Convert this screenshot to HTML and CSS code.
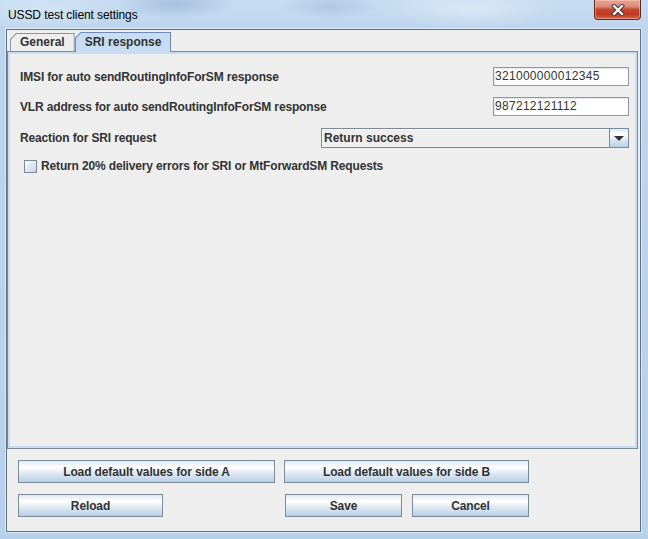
FILE: index.html
```html
<!DOCTYPE html>
<html>
<head>
<meta charset="utf-8">
<title>USSD test client settings</title>
<link rel="stylesheet" href="styles.css">
</head>
<body>
<div class="window">
  <div class="titlebar">
    <span class="title">USSD test client settings</span>
    <div class="close">
      <svg width="14" height="12" viewBox="0 0 14 12">
        <path d="M3 2 L11 10 M11 2 L3 10" stroke="#3b3b3b" stroke-width="4.2" stroke-linecap="square" fill="none"/>
        <path d="M3 2 L11 10 M11 2 L3 10" stroke="#ffffff" stroke-width="2.2" stroke-linecap="square" fill="none"/>
      </svg>
    </div>
  </div>
  <div class="client">
    <div class="tabs">
      <div class="tab"><div class="tab-in">General</div></div>
      <div class="tab sel"><div class="tab-in">SRI response</div></div>
    </div>
    <div class="panel">
      <div class="row r1">
        <span class="label">IMSI for auto sendRoutingInfoForSM response</span>
        <div class="field">321000000012345</div>
      </div>
      <div class="row r2">
        <span class="label">VLR address for auto sendRoutingInfoForSM response</span>
        <div class="field">987212121112</div>
      </div>
      <div class="row r3">
        <span class="label">Reaction for SRI request</span>
        <div class="combo">
          <div class="combo-text">Return success</div>
          <div class="combo-btn"><span class="arrow"></span></div>
        </div>
      </div>
      <div class="checkrow">
        <span class="check"></span>
        <span class="label">Return 20% delivery errors for SRI or MtForwardSM Requests</span>
      </div>
    </div>
    <div class="buttons">
      <div class="brow">
        <div class="btn w-a">Load default values for side A</div>
        <div class="btn w-b">Load default values for side B</div>
      </div>
      <div class="brow second">
        <div class="btn w-reload">Reload</div>
        <div class="btn w-save">Save</div>
        <div class="btn w-cancel">Cancel</div>
      </div>
    </div>
  </div>
</div>
</body>
</html>
```
FILE: styles.css
```css
* { box-sizing: border-box; }
html, body { margin: 0; padding: 0; }
body {
  width: 648px;
  height: 539px;
  overflow: hidden;
  font-family: "Liberation Sans", Arial, sans-serif;
  background: #c0d7ee;
}
.window {
  display: flex;
  flex-direction: column;
  height: 539px;
  background:
    radial-gradient(ellipse 60px 14px at 175px 4px, rgba(140,170,205,0.55), rgba(140,170,205,0) 100%),
    radial-gradient(ellipse 50px 12px at 330px 6px, rgba(150,178,210,0.45), rgba(150,178,210,0) 100%),
    radial-gradient(ellipse 90px 20px at 470px 8px, rgba(225,238,250,0.7), rgba(225,238,250,0) 100%),
    radial-gradient(ellipse 80px 20px at 40px 10px, rgba(220,234,248,0.6), rgba(220,234,248,0) 100%),
    linear-gradient(to bottom, #c6dcf1 0px, #bdd5ed 30px, #b8d1eb 100%);
}
.titlebar {
  height: 29px;
  flex: none;
  display: flex;
  justify-content: space-between;
  align-items: flex-start;
  padding-left: 8px;
}
.title {
  margin-top: 9px;
  font-size: 12px;
  line-height: 12px;
  letter-spacing: -0.1px;
  color: #000;
}
.close {
  width: 47px;
  height: 20px;
  margin-right: 7px;
  border: 1px solid #5b2a24;
  border-top: none;
  border-radius: 0 0 4px 4px;
  background: linear-gradient(to bottom, #e8a596 0%, #dc8a76 35%, #c6472c 50%, #c1391f 75%, #d9664a 100%);
  box-shadow: inset 0 0 0 1px rgba(255,210,200,0.45);
  display: flex;
  align-items: center;
  justify-content: center;
}
.close svg { display: block; }

.client {
  flex: 1;
  margin: 0 7px 7px 6px;
  border: 1px solid #5c6f83;
  box-shadow: 0 0 0 1px rgba(235,244,252,0.7);
  background: #eeeeee;
  display: flex;
  flex-direction: column;
}
.tabs {
  display: flex;
  height: 19px;
  margin-top: 2px;
  padding-left: 3px;
  flex: none;
  position: relative;
  z-index: 1;
}
.tab {
  height: 18px;
  margin-top: 1px;
  padding: 1px 1px 0 1px;
  background: #8696a8;
  clip-path: polygon(0 6px, 6px 0, 100% 0, 100% 100%, 0 100%);
}
.tab-in {
  height: 100%;
  background: #eeeeee;
  clip-path: polygon(0 5.5px, 5.5px 0, 100% 0, 100% 100%, 0 100%);
  padding-left: 9px;
  padding-right: 9px;
  font-size: 12px;
  font-weight: bold;
  color: #333333;
  line-height: 17px;
  white-space: nowrap;
}
.tab.sel {
  height: 20px;
  margin-top: 0;
  background: #6f88b5;
}
.tab.sel .tab-in {
  background: #c8ddf2;
  line-height: 19px;
}
.panel {
  height: 398px;
  flex: none;
  margin-right: 2px;
  border: 1px solid #7a8a99;
  box-shadow: inset 0 0 0 2px #c8ddf2;
  padding: 15px 8px 0 12px;
  display: flex;
  flex-direction: column;
}
.row {
  display: flex;
  align-items: center;
  justify-content: space-between;
  height: 19px;
}
.r2 { margin-top: 11px; }
.r3 { margin-top: 12px; height: 20px; }
.label {
  font-size: 12px;
  font-weight: bold;
  letter-spacing: -0.15px;
  color: #333333;
  white-space: nowrap;
}
.field {
  width: 136px;
  height: 19px;
  border: 1px solid #8d99a6;
  box-shadow: inset 1px 1px 0 #e4e8ec;
  background: #ffffff;
  padding-left: 1px;
  font-size: 12px;
  line-height: 17px;
  letter-spacing: 0.3px;
  color: #333333;
}
.combo {
  width: 308px;
  height: 20px;
  display: flex;
  border: 1px solid #7a8a99;
  background: #eeeeee;
}
.combo-text {
  flex: 1;
  padding-left: 2px;
  font-size: 12px;
  font-weight: bold;
  color: #333333;
  line-height: 18px;
  box-shadow: inset 1px 1px 0 #ffffff;
}
.combo-btn {
  width: 19px;
  border-left: 1px solid #7a8a99;
  background: linear-gradient(to bottom, #dde8f3 0%, #ffffff 30%, #dde8f3 60%, #b8cfe5 100%);
  display: flex;
  align-items: center;
  justify-content: center;
}
.arrow {
  width: 0;
  height: 0;
  border-left: 5px solid transparent;
  border-right: 5px solid transparent;
  border-top: 5px solid #333333;
  margin-top: 1px;
}
.checkrow {
  display: flex;
  align-items: center;
  height: 14px;
  margin-top: 11px;
}
.check {
  width: 13px;
  height: 13px;
  margin-left: 4px;
  margin-right: 4px;
  border: 1px solid #7a8a99;
  background: linear-gradient(to bottom right, #ffffff 0%, #dde8f3 50%, #c2d6ea 100%);
}
.buttons {
  flex: 1;
  padding: 11px 0 0 11px;
}
.brow {
  display: flex;
  height: 23px;
}
.brow.second { margin-top: 11px; }
.btn {
  height: 23px;
  border: 1px solid #7a8a99;
  background: linear-gradient(to bottom, #dde8f3 0%, #ffffff 30%, #dde8f3 60%, #b8cfe5 100%);
  font-size: 12px;
  font-weight: bold;
  letter-spacing: -0.12px;
  color: #333333;
  display: flex;
  align-items: center;
  justify-content: center;
  white-space: nowrap;
}
.w-a { width: 257px; }
.w-b { width: 245px; margin-left: 9px; }
.w-reload { width: 145px; }
.w-save { width: 117px; margin-left: 122px; }
.w-cancel { width: 117px; margin-left: 10px; }
```
